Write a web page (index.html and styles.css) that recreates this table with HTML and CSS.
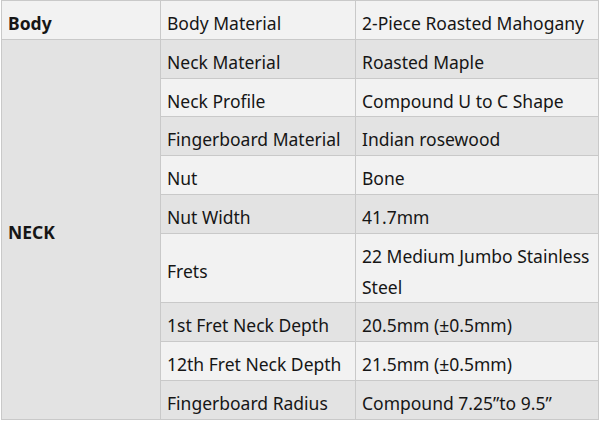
FILE: index.html
```html
<!DOCTYPE html>
<html>
<head>
<meta charset="utf-8">
<link rel="stylesheet" href="styles.css">
</head>
<body>
<table class="spec">
  <colgroup>
    <col class="c1">
    <col class="c2">
    <col class="c3">
  </colgroup>
  <tbody>
    <tr class="light">
      <th class="group">Body</th>
      <td>Body Material</td>
      <td>2-Piece Roasted Mahogany</td>
    </tr>
    <tr class="dark">
      <th class="group" rowspan="9">NECK</th>
      <td>Neck Material</td>
      <td>Roasted Maple</td>
    </tr>
    <tr class="light">
      <td>Neck Profile</td>
      <td>Compound U to C Shape</td>
    </tr>
    <tr class="dark">
      <td>Fingerboard Material</td>
      <td>Indian rosewood</td>
    </tr>
    <tr class="light">
      <td>Nut</td>
      <td>Bone</td>
    </tr>
    <tr class="dark">
      <td>Nut Width</td>
      <td>41.7mm</td>
    </tr>
    <tr class="light">
      <td>Frets</td>
      <td>22 Medium Jumbo Stainless Steel</td>
    </tr>
    <tr class="dark">
      <td>1st Fret Neck Depth</td>
      <td>20.5mm (±0.5mm)</td>
    </tr>
    <tr class="light">
      <td>12th Fret Neck Depth</td>
      <td>21.5mm (±0.5mm)</td>
    </tr>
    <tr class="dark">
      <td>Fingerboard Radius</td>
      <td>Compound 7.25”to 9.5”</td>
    </tr>
  </tbody>
</table>
</body>
</html>
```
FILE: styles.css
```css
html, body {
  margin: 0;
  padding: 0;
  background: #ffffff;
}
.spec {
  margin: 0 0 0 1px;
  width: 597px;
  table-layout: fixed;
  border-collapse: collapse;
  font-family: "Noto Sans", "Liberation Sans", sans-serif;
  font-size: 17.5px;
  color: #161616;
}
.c1 { width: 159px; }
.c2 { width: 195px; }
.c3 { width: 243px; }
.spec th, .spec td {
  border: 1px solid #c9c9c9;
  text-align: left;
  vertical-align: middle;
  padding: 7px 6px 0 6px;
  line-height: 30.8px;
  font-weight: normal;
}
.spec th.group {
  font-weight: bold;
}
.light td, .light th { background: #f2f2f2; }
.dark td, .dark th { background: #e3e3e3; }
```
